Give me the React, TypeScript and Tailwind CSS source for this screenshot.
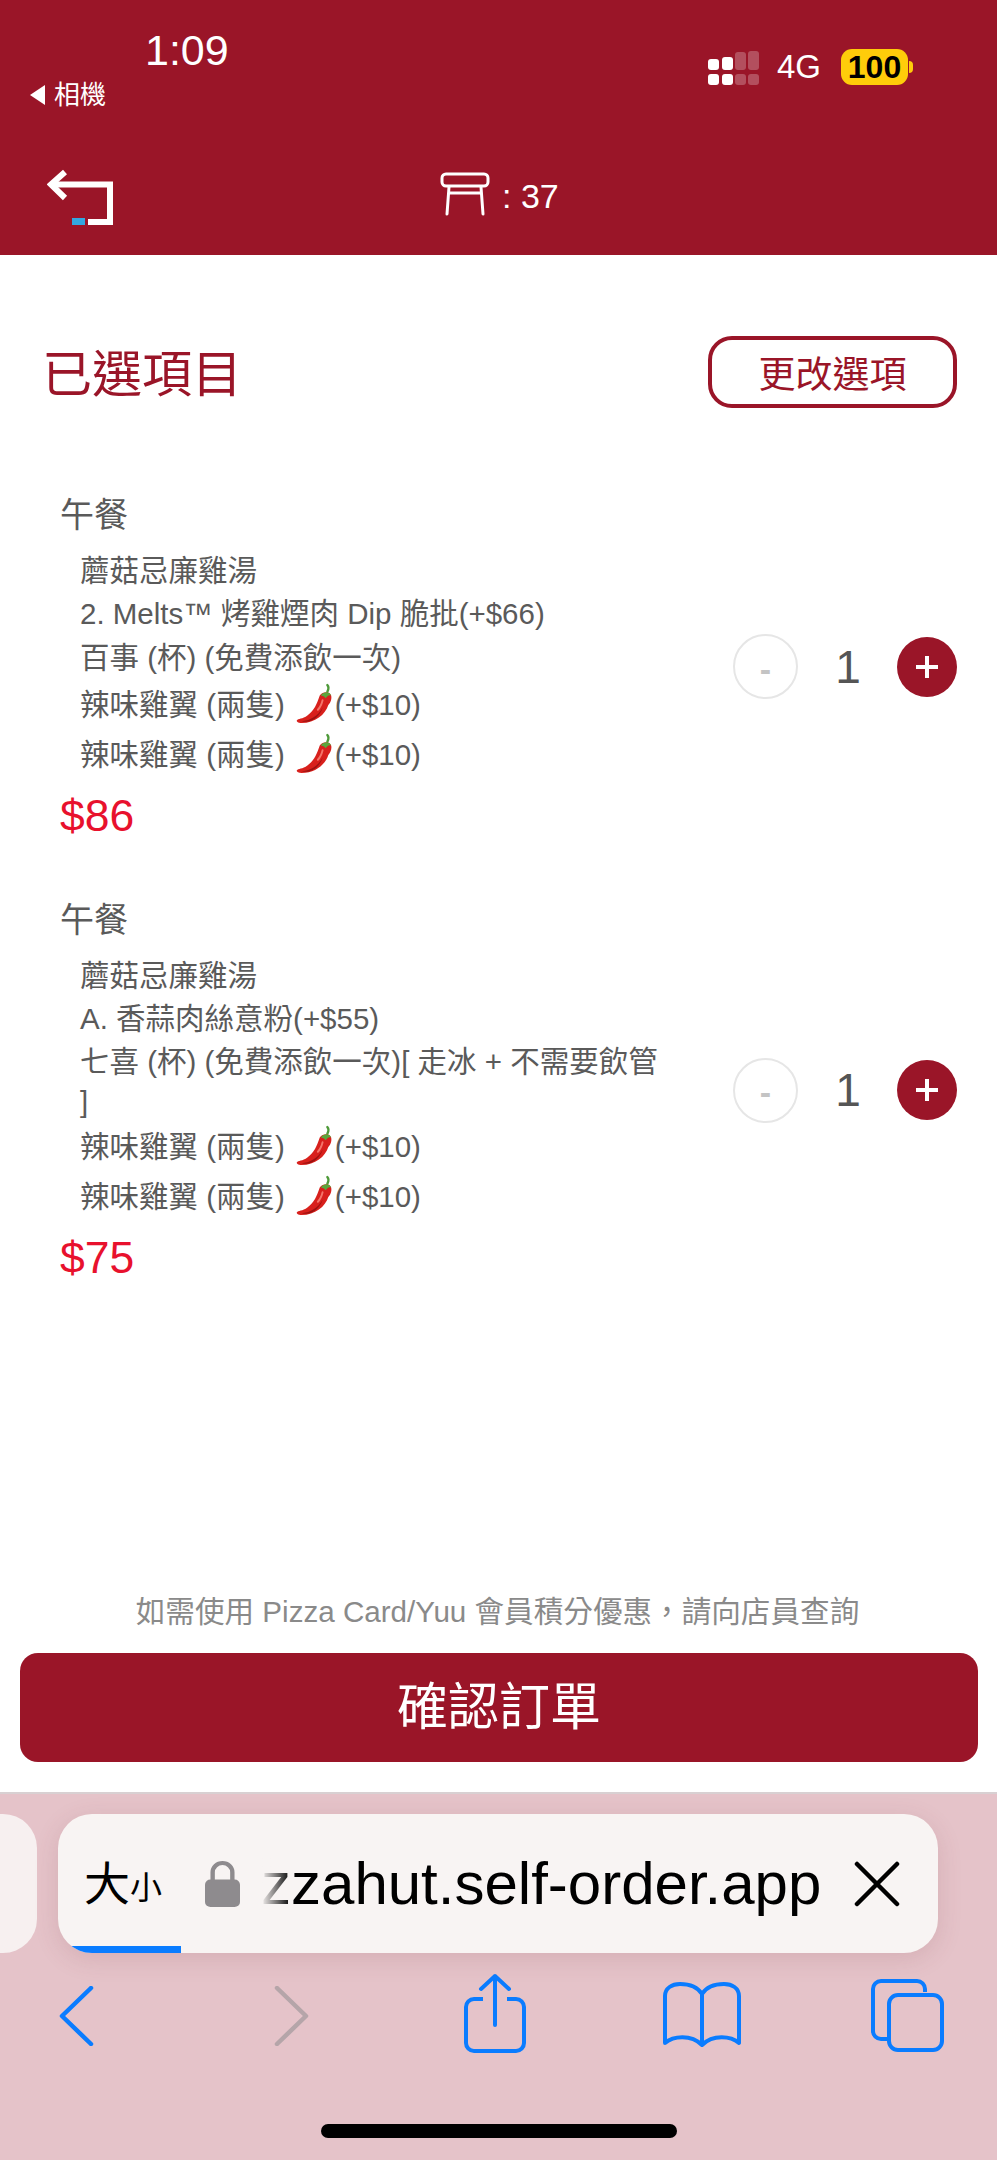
import React from "react";

const font = { fontFamily: '"Liberation Sans","Noto Sans CJK TC",sans-serif' };

function Chili() {
  return (
    <svg width="38" height="44" viewBox="0 0 40 44" className="shrink-0">
      <path d="M33 1c2 2 1 5 0 7" stroke="#4f9a3a" strokeWidth="2.5" fill="none" strokeLinecap="round" />
      <path d="M25 12c3-4 10-5 12 0 1 4-1 8-3 10C31 32 20 41 6 41c-4 0-6-2-5-3 1-2 6-1 11-5 7-5 10-12 13-21z" fill="#d8201c" />
      <path d="M6 39c8 0 17-5 22-14-3 10-13 17-22 14z" fill="#9c1210" />
      <path d="M26 12c3-4 9-5 11 0-3-1-4 1-6 3-1-2-3-3-5-3z" fill="#5aa63c" />
      <path d="M28 17c-1 4-3 8-5 10" stroke="#f4756a" strokeWidth="2" fill="none" strokeLinecap="round" />
    </svg>
  );
}

function Line({ children, h }: { children: React.ReactNode; h: string }) {
  return <div className={`flex items-center whitespace-nowrap ${h}`}>{children}</div>;
}

function Spicy() {
  return (
    <div className="flex items-center h-[50px] whitespace-nowrap">
      <span>辣味雞翼 (兩隻)</span>
      <span className="ml-[11px] mr-[1px]"><Chili /></span>
      <span>(+$10)</span>
    </div>
  );
}

function Stepper() {
  return (
    <div className="flex items-center shrink-0 w-[224px] mb-[6px]">
      <div className="w-[65px] h-[65px] rounded-full border-2 border-[#e6e6e6] flex items-center justify-center text-[#c4c4c4] text-[34px] leading-none pt-[4px] font-bold">-</div>
      <div className="w-[100px] text-center text-[46px] leading-none text-[#555555]">1</div>
      <div className="w-[60px] h-[60px] rounded-full bg-[#9a1528] flex items-center justify-center -ml-[1px]">
        <svg width="26" height="26" viewBox="0 0 26 26">
          <path d="M13 2v22M2 13h22" stroke="#fff" strokeWidth="4" />
        </svg>
      </div>
    </div>
  );
}

function Order({ price, children }: { price: string; children: React.ReactNode }) {
  return (
    <div className="flex items-center justify-between">
      <div className="w-[620px]">
        <div className="text-[34px] leading-[40px] text-[#5a5a5a] mb-[14px]">午餐</div>
        <div className="pl-[20px] text-[29.5px] text-[#5a5a5a]">{children}</div>
        <div className="text-[44.5px] leading-[56px] text-[#e8112d] mt-[8px]">{price}</div>
      </div>
      <Stepper />
    </div>
  );
}

export default function App() {
  return (
    <div className="w-[997px] h-[2160px] flex flex-col bg-white overflow-hidden" style={font}>
      <header className="h-[255px] shrink-0 bg-[#9a1528] text-white flex flex-col">
        <div className="h-[148px] flex justify-between pt-[26px]">
          <div>
            <div className="ml-[145px] text-[43px] leading-[48px]">1:09</div>
            <div className="ml-[29px] mt-[6px] flex items-center gap-[9px] text-[26px] leading-[30px]">
              <svg width="16" height="22" viewBox="0 0 16 22"><path d="M16 1v20L1 11z" fill="#fff" /></svg>
              <span>相機</span>
            </div>
          </div>
          <div className="flex items-start gap-[18px] pr-[84px] pt-[24px]">
            <svg width="51" height="34" viewBox="0 3 51 34" className="mt-[1px]">
              <rect x="0" y="11" width="11" height="11" rx="3" fill="#fff" />
              <rect x="0" y="26" width="11" height="11" rx="3" fill="#fff" />
              <rect x="14" y="9" width="11" height="13" rx="3" fill="#fff" />
              <rect x="14" y="26" width="11" height="11" rx="3" fill="#fff" />
              <rect x="27" y="4" width="11" height="18" rx="3" fill="#fff" fillOpacity=".25" />
              <rect x="27" y="26" width="11" height="11" rx="3" fill="#fff" fillOpacity=".25" />
              <rect x="40" y="3" width="11" height="19" rx="3" fill="#fff" fillOpacity=".25" />
              <rect x="40" y="26" width="11" height="11" rx="3" fill="#fff" fillOpacity=".25" />
            </svg>
            <span className="text-[33px] leading-[38px] -mt-[2px]">4G</span>
            <div className="flex items-center ml-[2px] -mt-[1px]">
              <div className="w-[67px] h-[36px] rounded-[11px] bg-[#ffcc0a] text-black text-[32px] leading-[36px] font-bold text-center">100</div>
              <div className="w-[4px] h-[12px] rounded-r-full bg-[#ffcc0a] ml-[1px]" />
            </div>
          </div>
        </div>
        <div className="flex-1 relative flex items-start pl-[47px] pt-[21px]">
          <svg width="66" height="56" viewBox="0 0 66 56">
            <path d="M18 3L4 15.500 18 29" stroke="#fff" strokeWidth="6" fill="none" />
            <path d="M6 15.500H63V53H41" stroke="#fff" strokeWidth="6" fill="none" />
            <rect x="25" y="49" width="13" height="7" fill="#33a7e0" />
          </svg>
          <div className="ml-[327px] mt-[3px] flex items-center gap-[12px]">
            <svg width="50" height="44" viewBox="0 0 50 44">
              <rect x="2" y="2" width="46" height="12" rx="4" fill="none" stroke="#fff" strokeWidth="3" />
              <path d="M9 15L7 42M41 15L43 42M9 21H41" stroke="#fff" strokeWidth="3" fill="none" strokeLinecap="round" />
            </svg>
            <span className="text-[34px] leading-[40px] pt-[4px]">: 37</span>
          </div>
        </div>
      </header>

      <main className="flex-1 flex flex-col">
        <div className="flex items-center justify-between pl-[42px] pr-[40px] pt-[81px]">
          <h1 className="text-[50px] leading-[64px] font-normal text-[#9a1528] pt-[5px]">已選項目</h1>
          <button className="w-[249px] h-[72px] border-[4px] border-[#9a1528] rounded-[24px] text-[37px] leading-none text-[#9a1528] bg-white pt-[6px]">更改選項</button>
        </div>

        <div className="pl-[60px] pr-[40px] pt-[87px] flex flex-col gap-[56px]">
          <Order price="$86">
            <Line h="h-[44px]">蘑菇忌廉雞湯</Line>
            <Line h="h-[43px]">2. Melts™ 烤雞煙肉 Dip 脆批(+$66)</Line>
            <Line h="h-[44px]">百事 (杯) (免費添飲一次)</Line>
            <Spicy />
            <Spicy />
          </Order>
          <Order price="$75">
            <Line h="h-[44px]">蘑菇忌廉雞湯</Line>
            <Line h="h-[43px]">A. 香蒜肉絲意粉(+$55)</Line>
            <Line h="h-[42px]">七喜 (杯) (免費添飲一次)[ 走冰 + 不需要飲管</Line>
            <Line h="h-[39px]">]</Line>
            <Spicy />
            <Spicy />
          </Order>
        </div>

        <div className="mt-auto text-center text-[29.6px] leading-[34px] text-[#8a8a8a] pr-[2px]">如需使用 Pizza Card/Yuu 會員積分優惠，請向店員查詢</div>
        <div className="px-[20px] mt-[24px] mb-[30px]">
          <button className="w-[958px] h-[109px] rounded-[18px] bg-[#9a1528] text-white text-[51px] leading-none">確認訂單</button>
        </div>
      </main>

      <footer className="h-[368px] shrink-0 bg-[#e5c3c9] border-t-2 border-[#d8d0d2] flex flex-col overflow-hidden">
        <div className="flex gap-[21px] mt-[20px] -ml-[100px]">
          <div className="w-[137px] h-[139px] rounded-[34px] bg-[#f7f0f0] shrink-0" />
          <div className="w-[880px] h-[139px] shrink-0 rounded-[34px] bg-[#f8f4f3] shadow-[0_6px_24px_rgba(120,60,70,0.15)] relative overflow-hidden flex items-center pl-[26px]">
            <span className="text-[46px] leading-none text-black">大</span>
            <span className="text-[32px] leading-none text-black mt-[8px]">小</span>
            <svg width="35" height="47" viewBox="0 0 32 46" className="ml-[43px] shrink-0" preserveAspectRatio="none">
              <path d="M7 20V12a9 9 0 0 1 18 0v8" fill="none" stroke="#8e8b8e" strokeWidth="4" />
              <rect x="0" y="19" width="32" height="27" rx="5" fill="#8e8b8e" />
            </svg>
            <div className="relative ml-[21px] w-[558px] shrink-0">
              <span className="text-[60px] leading-none text-black whitespace-nowrap">zzahut.self-order.app</span>
              <div className="absolute left-0 top-0 bottom-0 w-[30px] bg-gradient-to-r from-[#f8f4f3] to-transparent" />
            </div>
            <svg width="46" height="46" viewBox="0 0 46 46" className="ml-[35px] shrink-0">
              <path d="M3 3L43 43M43 3L3 43" stroke="#000" strokeWidth="4.500" strokeLinecap="round" />
            </svg>
            <div className="absolute left-[12px] bottom-0 w-[111px] h-[7px] bg-[#0a7cff] rounded-bl-[12px]" />
          </div>
        </div>

        <div className="flex items-start pl-[58px] mt-[20px]">
          <svg width="36" height="60" viewBox="0 0 36 60" className="mt-[13px]">
            <path d="M33 2L4 30l29 28" fill="none" stroke="#0a7cff" strokeWidth="4.500" strokeLinecap="round" strokeLinejoin="round" />
          </svg>
          <svg width="36" height="60" viewBox="0 0 36 60" className="ml-[180px] mt-[13px]">
            <path d="M3 2L32 30 3 58" fill="none" stroke="#b5a5a9" strokeWidth="4.500" strokeLinecap="round" strokeLinejoin="round" />
          </svg>
          <svg width="62" height="80" viewBox="0 0 62 80" className="ml-[154px]">
            <path d="M19 26H10a8 8 0 0 0-8 8v36a8 8 0 0 0 8 8h42a8 8 0 0 0 8-8V34a8 8 0 0 0-8-8h-9" fill="none" stroke="#0a7cff" strokeWidth="4" />
            <path d="M31 52V3M17 16L31 3l14 13" fill="none" stroke="#0a7cff" strokeWidth="4" strokeLinecap="round" strokeLinejoin="round" />
          </svg>
          <svg width="80" height="66" viewBox="0 0 80 66" className="ml-[136px] mt-[9px]">
            <path d="M40 12C35 4 27 2 18 2 10 2 3 6 3 14v47c8-7 26-9 37 2 11-11 29-9 37-2V14c0-8-7-12-15-12-9 0-17 2-22 10zM40 12V62" fill="none" stroke="#0a7cff" strokeWidth="4" strokeLinejoin="round" />
          </svg>
          <svg width="74" height="73" viewBox="0 0 74 73" className="ml-[129px] mt-[6px]">
            <path d="M54 13V10a8 8 0 0 0-8-8H10a8 8 0 0 0-8 8v42a8 8 0 0 0 8 8h7" fill="none" stroke="#0a7cff" strokeWidth="4" />
            <rect x="18" y="16" width="53" height="55" rx="9" fill="none" stroke="#0a7cff" strokeWidth="4" />
          </svg>
        </div>

        <div className="w-[356px] h-[14px] rounded-full bg-black ml-[321px] mt-[71px]" />
      </footer>
    </div>
  );
}
